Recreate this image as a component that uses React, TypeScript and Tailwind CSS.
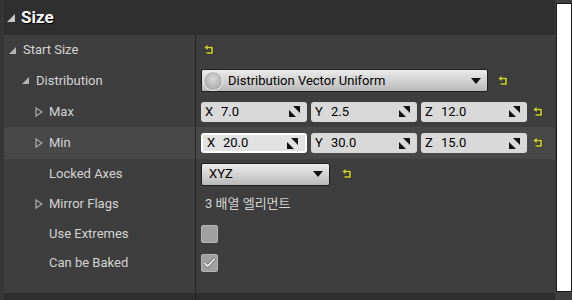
import React from "react";

const font = { fontFamily: "Roboto, 'Noto Sans CJK KR', sans-serif" };

function ExpandedArrow({ size = 7, color = "#b4b4b4" }: { size?: number; color?: string }) {
  return (
    <svg width={size} height={size} viewBox="0 0 8 8">
      <polygon points="8,0 8,8 0,8" fill={color} />
    </svg>
  );
}

function CollapsedArrow() {
  return (
    <svg width="8" height="10" viewBox="0 0 8 10">
      <polygon points="1,1 7,5 1,9" fill="none" stroke="#a8a8a8" strokeWidth="1.3" />
    </svg>
  );
}

function ResetArrow() {
  return (
    <svg width="10" height="10" viewBox="0 0 10 10">
      <path d="M3 2.5 H8 V8 H2.5" fill="none" stroke="#2a2a10" strokeWidth="2.6" />
      <path d="M3 2.5 H8 V8 H2.5" fill="none" stroke="#d2d236" strokeWidth="1.6" />
      <polygon points="0.5,2.5 3.6,0 3.6,5" fill="#d2d236" />
    </svg>
  );
}

function DragIcon() {
  return (
    <svg width="11" height="11" viewBox="0 0 11 11">
      <polygon points="4,0 11,0 11,7" fill="#111" />
      <polygon points="0,4 0,11 7,11" fill="#111" />
    </svg>
  );
}

function DropArrow() {
  return (
    <svg width="10" height="6" viewBox="0 0 10 6">
      <polygon points="0,0 10,0 5,6" fill="#111" />
    </svg>
  );
}

function VecField({ axis, value, focused }: { axis: string; value: string; focused?: boolean }) {
  return (
    <div
      className={`flex h-[20px] w-[106px] items-center rounded-[3px] pl-[4px] pr-[7px] text-[13px] text-black ${
        focused ? "border-2 border-white bg-[#e2e2e2] pl-[2px]" : "bg-[#d9d9d9]"
      }`}
    >
      <span className="w-[16px]">{axis}</span>
      <span className="flex-1">{value}</span>
      <DragIcon />
    </div>
  );
}

function Row({
  h,
  indent,
  arrow,
  label,
  highlight,
  children,
}: {
  h: number;
  indent: number;
  arrow?: "open" | "closed";
  label: string;
  highlight?: boolean;
  children?: React.ReactNode;
}) {
  return (
    <div className={`flex ${highlight ? "bg-[#484848]" : ""}`} style={{ height: h }}>
      <div className="flex w-[191px] items-center text-[13px] text-[#d4d4d4]" style={{ paddingLeft: indent }}>
        <span className="flex w-[14px] items-center">
          {arrow === "open" && <ExpandedArrow />}
          {arrow === "closed" && <CollapsedArrow />}
        </span>
        <span>{label}</span>
      </div>
      <div className="w-px bg-[#262626]" />
      <div className="flex flex-1 items-center pl-[5px]">{children}</div>
    </div>
  );
}

function Combo({ width, children }: { width: number; children: React.ReactNode }) {
  return (
    <div
      className="flex h-[23px] items-center rounded-[2px] border border-[#1e1e1e] bg-gradient-to-b from-[#ececec] to-[#b9b9b9] pr-[6px] text-[13px] text-black"
      style={{ width }}
    >
      {children}
    </div>
  );
}

export default function App() {
  return (
    <div className="flex h-[300px] w-[572px] overflow-hidden bg-[#3e3e3e]" style={font}>
      <div className="w-[4px] bg-[#363636]" />
      <div className="flex w-[551px] flex-col">
        {/* category header */}
        <div className="flex h-[35px] items-center bg-[#2f2f2f] pl-[3px]">
          <ExpandedArrow size={8} color="#c8c8c8" />
          <span
            className="ml-[6px] text-[17px] font-bold text-white"
            style={{ textShadow: "1px 1px 1px #000" }}
          >
            Size
          </span>
        </div>

        <Row h={30} indent={5} arrow="open" label="Start Size">
          <span className="ml-[3px]">
            <ResetArrow />
          </span>
        </Row>

        <Row h={31} indent={18} arrow="open" label="Distribution">
          <Combo width={287}>
            <div className="ml-[1px] h-[20px] w-[20px] rounded-full border border-[#f4f4f4] bg-[radial-gradient(circle_at_50%_40%,#d8d8d8,#9a9a9a)]" />
            <span className="ml-[5px] flex-1">Distribution Vector Uniform</span>
            <DropArrow />
          </Combo>
          <span className="ml-[10px]">
            <ResetArrow />
          </span>
        </Row>

        <Row h={31} indent={31} arrow="closed" label="Max">
          <div className="flex gap-[4px]">
            <VecField axis="X" value="7.0" />
            <VecField axis="Y" value="2.5" />
            <VecField axis="Z" value="12.0" />
          </div>
          <span className="ml-[6px]">
            <ResetArrow />
          </span>
        </Row>

        <Row h={32} indent={31} arrow="closed" label="Min" highlight>
          <div className="flex gap-[4px]">
            <VecField axis="X" value="20.0" focused />
            <VecField axis="Y" value="30.0" />
            <VecField axis="Z" value="15.0" />
          </div>
          <span className="ml-[6px]">
            <ResetArrow />
          </span>
        </Row>

        <Row h={30} indent={31} label="Locked Axes">
          <Combo width={129}>
            <span className="ml-[7px] flex-1">XYZ</span>
            <DropArrow />
          </Combo>
          <span className="ml-[12px]">
            <ResetArrow />
          </span>
        </Row>

        <Row h={30} indent={31} arrow="closed" label="Mirror Flags">
          <span className="ml-[4px] text-[13px] text-[#d4d4d4]">3 배열 엘리먼트</span>
        </Row>

        <Row h={29} indent={31} label="Use Extremes">
          <div className="h-[18px] w-[17px] rounded-[2px] border border-[#b4b4b4] bg-[#a0a0a0]" />
        </Row>

        <Row h={29} indent={31} label="Can be Baked">
          <div className="flex h-[18px] w-[17px] items-center justify-center rounded-[2px] border border-[#b4b4b4] bg-[#a0a0a0]">
            <svg width="13" height="11" viewBox="0 0 13 11">
              <path d="M1.5 6 L4.8 9.2 L11.5 1.8" fill="none" stroke="#555" strokeWidth="3" />
              <path d="M1.5 6 L4.8 9.2 L11.5 1.8" fill="none" stroke="#ececec" strokeWidth="1.8" />
            </svg>
          </div>
        </Row>

        <div className="flex h-[16px]">
          <div className="w-[191px]" />
          <div className="w-px bg-[#262626]" />
        </div>
        <div className="flex flex-1 bg-[#2e2e2e]">
          <div className="w-[191px]" />
          <div className="w-px bg-[#262626]" />
        </div>
      </div>
      {/* scrollbar */}
      <div className="flex w-[17px] flex-col bg-[#3e3e3e] pt-[3px] pb-[8px]">
        <div className="ml-[1px] flex-1 border border-[#1a1a1a] bg-white" />
      </div>
    </div>
  );
}
